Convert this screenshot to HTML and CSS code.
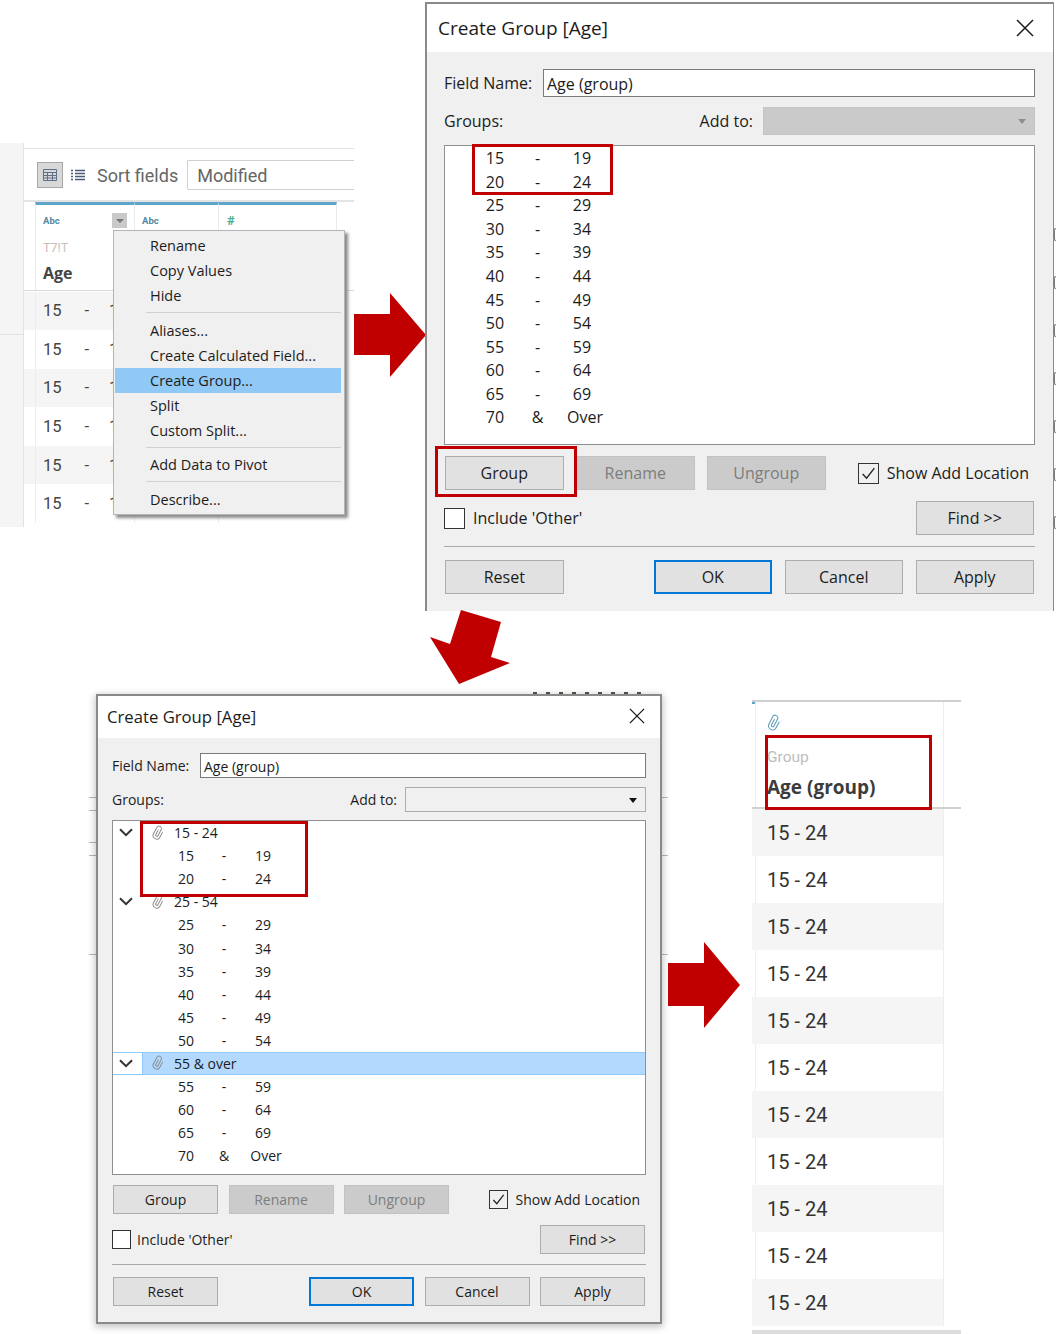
FILE: index.html
```html
<!DOCTYPE html>
<html lang="en">
<head>
<meta charset="utf-8">
<title>Create Group</title>
<link rel="stylesheet" href="styles.css">
</head>
<body>
<svg width="0" height="0" class="defs">
  <symbol id="clip" viewBox="0 0 20 20"><path transform="rotate(28 10 10)" d="M8.500 6V13a1.500 1.500 0 0 0 3 0V4.500a3 3 0 0 0-6 0V13.500a4.500 4.500 0 0 0 9 0V6" fill="none" stroke="currentColor" stroke-width="1.200"/></symbol>
  <symbol id="chev" viewBox="0 0 14 9"><path d="M1 1.200 7 7.200 13 1.200" fill="none" stroke="currentColor" stroke-width="2"/></symbol>
  <symbol id="close" viewBox="0 0 18 18"><path d="M1 1 17 17M17 1 1 17" fill="none" stroke="currentColor" stroke-width="1.500"/></symbol>
  <symbol id="tick" viewBox="0 0 16 16"><path d="M2.500 8.500 6.200 12.500 13.500 3" fill="none" stroke="currentColor" stroke-width="1.300"/></symbol>
</svg>

<main class="canvas">

  <section class="sheet">
    <div class="side"><div class="side-top"></div><div class="side-bottom"></div></div>
    <div class="sheet-main">
      <div class="toolbar">
        <span class="view-btn">
          <svg width="14" height="12" viewBox="0 0 14 12"><path d="M.5.500h13v11H.500zM.5 3.500h13M.5 6.500h13M.5 9h13M4.500 3.500V11.500M9.500 3.500V11.500" fill="none" stroke="#5d7088"/></svg>
        </span>
        <svg class="list-icon" width="14" height="12" viewBox="0 0 14 12"><path d="M0 1.500h2M0 4.500h2M0 7.500h2M0 10.500h2M4 1.500h10M4 4.500h10M4 7.500h10M4 10.500h10" fill="none" stroke="#4a5d78" stroke-width="1.400"/></svg>
        <span class="sort-label">Sort fields</span>
        <span class="sort-select">Modified</span>
      </div>
      <div class="head">
        <div class="hcol hcol-a">
          <span class="abc">Abc</span>
          <span class="src">T7!T</span>
          <span class="fname">Age</span>
          <span class="drop"><i></i></span>
        </div>
        <div class="hcol hcol-b"><span class="abc">Abc</span></div>
        <div class="hcol hcol-c"><span class="hash">#</span></div>
      </div>
      <div class="drows">
        <div class="drow odd"><b></b><b class="val"><span>15</span><span>-</span><span>1</span></b><b></b><b></b></div>
        <div class="drow"><b></b><b class="val"><span>15</span><span>-</span><span>1</span></b><b></b><b></b></div>
        <div class="drow odd"><b></b><b class="val"><span>15</span><span>-</span><span>1</span></b><b></b><b></b></div>
        <div class="drow"><b></b><b class="val"><span>15</span><span>-</span><span>1</span></b><b></b><b></b></div>
        <div class="drow odd"><b></b><b class="val"><span>15</span><span>-</span><span>1</span></b><b></b><b></b></div>
        <div class="drow"><b></b><b class="val"><span>15</span><span>-</span><span>1</span></b><b></b><b></b></div>
      </div>
    </div>
    <ul class="menu">
      <li>Rename</li>
      <li>Copy Values</li>
      <li>Hide</li>
      <li class="msep"></li>
      <li>Aliases...</li>
      <li>Create Calculated Field...</li>
      <li class="active">Create Group...</li>
      <li>Split</li>
      <li>Custom Split...</li>
      <li class="msep"></li>
      <li>Add Data to Pivot</li>
      <li class="msep"></li>
      <li>Describe...</li>
    </ul>
  </section>

  <svg class="arrow arrow-right-1" width="72" height="84" viewBox="0 0 72 84"><path d="M0 21H36V0L72 42 36 84V62H0Z"/></svg>

  <div class="edge-strip"><i></i><i></i><i></i><i></i><i></i><i></i><i></i></div>

  <section class="dialog d1">
    <header class="dlg-title"><span>Create Group [Age]</span><svg class="dlg-x"><use href="#close"/></svg></header>
    <div class="dlg-body">
      <div class="frow"><label class="flabel">Field Name:</label><div class="input">Age (group)</div></div>
      <div class="frow grow"><label class="glabel">Groups:</label><label>Add to:</label><div class="select off"><i></i></div></div>
      <div class="list">
        <div class="lrow"><span>15</span><span>-</span><span>19</span></div>
        <div class="lrow"><span>20</span><span>-</span><span>24</span></div>
        <div class="lrow"><span>25</span><span>-</span><span>29</span></div>
        <div class="lrow"><span>30</span><span>-</span><span>34</span></div>
        <div class="lrow"><span>35</span><span>-</span><span>39</span></div>
        <div class="lrow"><span>40</span><span>-</span><span>44</span></div>
        <div class="lrow"><span>45</span><span>-</span><span>49</span></div>
        <div class="lrow"><span>50</span><span>-</span><span>54</span></div>
        <div class="lrow"><span>55</span><span>-</span><span>59</span></div>
        <div class="lrow"><span>60</span><span>-</span><span>64</span></div>
        <div class="lrow"><span>65</span><span>-</span><span>69</span></div>
        <div class="lrow"><span>70</span><span>&amp;</span><span class="over">Over</span></div>
        <div class="redbox rb-list"></div>
      </div>
      <div class="brow r1">
        <button class="btn">Group</button><button class="btn off">Rename</button><button class="btn off">Ungroup</button>
        <span class="check on right"><i class="cb"><svg><use href="#tick"/></svg></i>Show Add Location</span>
        <div class="redbox rb-btn"></div>
      </div>
      <div class="brow r2">
        <span class="check"><i class="cb"></i>Include 'Other'</span>
        <button class="btn right">Find &gt;&gt;</button>
      </div>
      <div class="sep"></div>
      <div class="brow r3">
        <button class="btn">Reset</button>
        <button class="btn ok right">OK</button><button class="btn">Cancel</button><button class="btn">Apply</button>
      </div>
    </div>
  </section>

  <svg class="arrow arrow-down" width="81" height="75" viewBox="0 0 81 75"><path d="M31 0 71 12 61 47 80 53 29 74 0 27 20 34Z"/></svg>

  <div class="backdrop-lines"></div>
  <div class="top-frag"></div>

  <section class="dialog d2">
    <header class="dlg-title"><span>Create Group [Age]</span><svg class="dlg-x"><use href="#close"/></svg></header>
    <div class="dlg-body">
      <div class="frow"><label class="flabel">Field Name:</label><div class="input">Age (group)</div></div>
      <div class="frow grow"><label class="glabel">Groups:</label><label>Add to:</label><div class="select"><i></i></div></div>
      <div class="list">
        <div class="grow-row"><svg class="chev"><use href="#chev"/></svg><svg class="pclip"><use href="#clip"/></svg><span>15 - 24</span></div>
        <div class="lrow"><span>15</span><span>-</span><span>19</span></div>
        <div class="lrow"><span>20</span><span>-</span><span>24</span></div>
        <div class="grow-row"><svg class="chev"><use href="#chev"/></svg><svg class="pclip"><use href="#clip"/></svg><span>25 - 54</span></div>
        <div class="lrow"><span>25</span><span>-</span><span>29</span></div>
        <div class="lrow"><span>30</span><span>-</span><span>34</span></div>
        <div class="lrow"><span>35</span><span>-</span><span>39</span></div>
        <div class="lrow"><span>40</span><span>-</span><span>44</span></div>
        <div class="lrow"><span>45</span><span>-</span><span>49</span></div>
        <div class="lrow"><span>50</span><span>-</span><span>54</span></div>
        <div class="grow-row sel"><svg class="chev"><use href="#chev"/></svg><svg class="pclip"><use href="#clip"/></svg><span>55 &amp; over</span></div>
        <div class="lrow"><span>55</span><span>-</span><span>59</span></div>
        <div class="lrow"><span>60</span><span>-</span><span>64</span></div>
        <div class="lrow"><span>65</span><span>-</span><span>69</span></div>
        <div class="lrow"><span>70</span><span>&amp;</span><span class="over">Over</span></div>
        <div class="redbox rb-list"></div>
      </div>
      <div class="brow r1">
        <button class="btn">Group</button><button class="btn off">Rename</button><button class="btn off">Ungroup</button>
        <span class="check on right"><i class="cb"><svg><use href="#tick"/></svg></i>Show Add Location</span>
      </div>
      <div class="brow r2">
        <span class="check"><i class="cb"></i>Include 'Other'</span>
        <button class="btn right">Find &gt;&gt;</button>
      </div>
      <div class="sep"></div>
      <div class="brow r3">
        <button class="btn">Reset</button>
        <button class="btn ok right">OK</button><button class="btn">Cancel</button><button class="btn">Apply</button>
      </div>
    </div>
  </section>

  <svg class="arrow arrow-right-2" width="72" height="86" viewBox="0 0 72 86"><path d="M0 21H36V0L72 43 36 86V64H0Z"/></svg>

  <section class="result">
    <div class="r-head">
      <svg class="r-clip"><use href="#clip"/></svg>
      <span class="r-src">Group</span>
      <span class="r-name">Age (group)</span>
      <div class="redbox rb-result"></div>
    </div>
    <div class="r-row odd">15 - 24</div>
    <div class="r-row">15 - 24</div>
    <div class="r-row odd">15 - 24</div>
    <div class="r-row">15 - 24</div>
    <div class="r-row odd">15 - 24</div>
    <div class="r-row">15 - 24</div>
    <div class="r-row odd">15 - 24</div>
    <div class="r-row">15 - 24</div>
    <div class="r-row odd">15 - 24</div>
    <div class="r-row">15 - 24</div>
    <div class="r-row odd">15 - 24</div>
    <div class="r-foot"></div>
  </section>
</main>
</body>
</html>
```
FILE: styles.css
```css
* { box-sizing: border-box; }
html, body { margin: 0; padding: 0; background: #fff; }
body { font-family: "Open Sans", "Noto Sans", sans-serif; color: #1c1c1c; }
.defs { position: absolute; }
.canvas { position: relative; width: 1056px; height: 1334px; overflow: hidden; background: #fff; }

.arrow { position: absolute; fill: #c00000; }
.arrow-right-1 { left: 354px; top: 293px; }
.arrow-right-2 { left: 668px; top: 942px; }
.arrow-down { left: 430px; top: 610px; }

.redbox { position: absolute; border: 3px solid #c00000; pointer-events: none; }

/* Data sheet */
.sheet { position: absolute; left: 0; top: 143px; width: 354px; height: 384px; display: flex; font-family: "Roboto", "Open Sans", sans-serif; }
.side { width: 24px; background: #f5f5f5; border-right: 1px solid #e2e2e2; flex: none; }
.side-top { height: 192px; border-bottom: 1px solid #e2e2e2; }
.sheet-main { flex: 1; min-width: 0; display: flex; flex-direction: column; overflow: hidden; }
.toolbar { height: 54px; margin-top: 5px; border-top: 1px solid #e3e3e3; border-bottom: 2px solid #e3e3e3; display: flex; align-items: center; padding: 0 0 0 13px; flex: none; }
.view-btn { width: 26px; height: 26px; background: #d8d8d8; border: 1px solid #a8a8a8; display: flex; align-items: center; justify-content: center; flex: none; }
.list-icon { margin-left: 8px; flex: none; }
.sort-label { margin-left: 12px; padding-top: 2px; font-size: 18px; color: #666; white-space: nowrap; }
.sort-select { margin-left: 9px; flex: 1; height: 30px; border: 1px solid #d0d0d0; border-right: 0; border-radius: 2px 0 0 2px; padding: 1px 0 0 9px; font-size: 18px; line-height: 28px; color: #666; white-space: nowrap; }
.head { display: grid; grid-template-columns: 99px 84px 119px; padding-left: 11px; height: 89px; border-bottom: 1px solid #d8d8d8; flex: none; }
.hcol { position: relative; border-top: 3px solid #5fa5cb; border-left: 1px solid #eaeaea; padding: 10px 0 0 7px; display: flex; flex-direction: column; align-items: flex-start; }
.hcol-c { border-right: 1px solid #eaeaea; padding-left: 8px; }
.abc { font-size: 9.500px; line-height: 12px; font-weight: 700; color: #53899f; }
.hash { font-size: 13px; line-height: 12px; font-weight: 700; color: #4ead8f; }
.src { margin-top: 13px; font-size: 12.500px; line-height: 15px; color: #c9bdb9; }
.fname { margin-top: 7px; font-size: 16px; line-height: 22px; font-weight: 700; color: #444; font-family: "Open Sans", sans-serif; }
.drop { position: absolute; left: 76px; top: 8px; width: 15px; height: 15px; background: #c9c9c9; display: flex; align-items: center; justify-content: center; }
.drop i { border: 4px solid transparent; border-top: 4px solid #777; border-bottom: 0; }
.drows { padding-top: .5px; }
.drow { display: grid; grid-template-columns: 11px 99px 84px 119px; width: 313px; height: 38.600px; font-size: 16.500px; color: #444; }
.drow b { font-weight: 400; border-left: 1px solid #ededed; }
.drow b:first-child { border-left: 0; }
.drow.odd { background: #f5f5f5; }
.val { display: flex; align-items: center; padding-left: 7px; }
.val span:nth-child(2) { margin-left: 23px; }
.val span:nth-child(3) { margin-left: 20px; }

.menu { position: absolute; left: 113px; top: 87px; width: 232px; height: 285px; margin: 0; padding: 2px 3px 0 1px; list-style: none; background: #f0f0f0; border: 1px solid #b5b5b5; box-shadow: 3px 3px 3px #8a8a8a; font-family: "Open Sans", sans-serif; font-size: 14.500px; color: #1c1c1c; }
.menu li { height: 25px; line-height: 25px; padding-left: 35px; white-space: nowrap; }
.menu li.active { background: #90c8f6; }
.menu li.msep { height: 1px; margin: 4px 0 4px 31px; padding: 0; background: #d0d0d0; }
.menu li.msep:nth-child(4) { margin-bottom: 5px; }
.menu li.msep:nth-child(12) { margin-bottom: 5px; }

/* Stray pieces of the pictures underneath the dialogs */
.edge-strip { position: absolute; left: 1054px; top: 228px; width: 2px; display: flex; flex-direction: column; gap: 35px; }
.edge-strip i { height: 13px; border: 1px solid #777; border-right: 0; border-radius: 3px 0 0 3px; }
.backdrop-lines { position: absolute; left: 89px; top: 790px; width: 579px; height: 170px; background:
  linear-gradient(#b8b8b8, #b8b8b8) 0 7px / 100% 1px no-repeat,
  linear-gradient(#b8b8b8, #b8b8b8) 0 20px / 8px 1px no-repeat,
  linear-gradient(#b8b8b8, #b8b8b8) 0 52px / 8px 1px no-repeat,
  linear-gradient(#b8b8b8, #b8b8b8) 0 65px / 100% 1px no-repeat,
  linear-gradient(#b8b8b8, #b8b8b8) 0 164px / 100% 1px no-repeat; }
.top-frag { position: absolute; left: 533px; top: 692px; width: 117px; height: 2px; background: repeating-linear-gradient(to right, #5a5248 0 4px, transparent 4px 13px); }

/* Dialogs */
.dialog { position: absolute; background: #f0f0f0; }
.dialog .dlg-title { background: #fff; display: flex; align-items: center; justify-content: space-between; white-space: nowrap; }
.dlg-x { color: #1c1c1c; flex: none; }
.dlg-body { display: flex; flex-direction: column; }
.frow { display: flex; align-items: center; flex: none; white-space: nowrap; }
.flabel { flex: none; }
.glabel { flex: 1; }
.input { flex: 1; height: 100%; background: #fff; border: 1px solid #7a7a7a; display: flex; align-items: center; padding: 1px 0 0 3px; }
.select { height: 100%; position: relative; background: #f0f0f0; border: 1px solid #adadad; flex: none; }
.select.off { background: #cacaca; border-color: #c4c4c4; }
.select i { position: absolute; top: 50%; right: 8px; margin-top: -2px; border: 4px solid transparent; border-top: 5px solid #111; border-bottom: 0; }
.select.off i { border-top-color: #8e8e8e; }
.list { position: relative; background: #fff; border: 1px solid #8f8f8f; flex: none; }
.lrow { display: grid; align-items: center; justify-items: center; white-space: nowrap; }
.over { margin-left: 6px; }
.brow { position: relative; display: flex; align-items: center; flex: none; white-space: nowrap; }
.btn { flex: none; padding: 0; margin: 0; height: 100%; background: #e1e1e1; border: 1px solid #adadad; font: inherit; color: #1c1c1c; }
.btn.off { background: #cbcbcb; border-color: #c2c2c2; color: #7d7d7d; }
.btn.ok { border: 2px solid #0078d7; }
.right { margin-left: auto; }
.check { display: flex; align-items: center; }
.cb { display: flex; align-items: center; justify-content: center; background: #fff; border: 1px solid #333; flex: none; }
.check.on .cb { background: #f0f0f0; }
.cb svg { display: block; color: #222; }
.sep { height: 1px; background: #a8a8a8; flex: none; }

.d1 { left: 425px; top: 2px; width: 629px; height: 609px; border: 2px solid #8a8a8a; border-right-width: 1px; border-bottom: 0; font-size: 16px; }
.d1 .dlg-title { height: 48px; padding: 0 19px 0 11px; font-size: 19px; }
.d1 .dlg-x { width: 18px; height: 18px; }
.d1 .dlg-body { padding: 17px 18px 0 17px; }
.d1 .frow { height: 28px; }
.d1 .flabel { width: 99px; }
.d1 .grow { margin-top: 10px; }
.d1 .select { width: 272px; margin-left: 10px; }
.d1 .list { margin-top: 10px; height: 300px; padding-top: .5px; }
.d1 .lrow { height: 23.550px; grid-template-columns: 30px 40px 45px 44px; }
.d1 .lrow span:first-child { grid-column: 2; }
.d1 .rb-list { left: 27px; top: -2px; width: 141px; height: 51px; }
.d1 .brow { padding: 0 1px; }
.d1 .btn { width: 118.500px; }
.d1 .r1 { margin-top: 11px; height: 34px; gap: 12.500px; }
.d1 .rb-btn { left: -9px; top: -10px; width: 142px; height: 51px; }
.d1 .r1 .check { gap: 8px; padding-right: 5px; }
.d1 .cb { width: 21px; height: 21px; }
.d1 .cb svg { width: 17px; height: 17px; }
.d1 .r2 { margin-top: 11px; height: 34px; padding-left: 0; }
.d1 .r2 .check { gap: 8px; }
.d1 .sep { margin-top: 11px; }
.d1 .r3 { margin-top: 13px; height: 34px; gap: 12.500px; }

.d2 { left: 96px; top: 694px; width: 566px; height: 630px; border: 2px solid #8a8a8a; box-shadow: 0 2px 7px 1px rgba(0, 0, 0, .24); font-size: 14px; }
.d2 .dlg-title { height: 42px; padding: 0 15px 2px 9px; font-size: 16.700px; }
.d2 .dlg-x { width: 16px; height: 16px; }
.d2 .dlg-body { padding: 15px 14px 0 14px; }
.d2 .frow { height: 25px; }
.d2 .flabel { width: 88px; }
.d2 .grow { margin-top: 9px; }
.d2 .select { width: 241px; margin-left: 8px; }
.d2 .list { margin-top: 8px; height: 355px; }
.d2 .lrow { height: 23.100px; grid-template-columns: 58px 30px 46px 32px; }
.d2 .lrow span:first-child { grid-column: 2; }
.grow-row { height: 23.100px; display: flex; align-items: center; white-space: nowrap; }
.chev { width: 14px; height: 9px; margin-left: 6px; color: #333; flex: none; }
.pclip { width: 16px; height: 16px; margin-left: 17px; color: #8a8a8a; flex: none; }
.grow-row span { margin-left: 8px; }
.grow-row.sel { background: linear-gradient(to right, #fff 29px, #8fcaff 29px, #8fcaff 30px, #b3d9ff 30px); box-shadow: inset 0 1px #8fcaff, inset 0 -1px #8fcaff; }
.d2 .rb-list { left: 27px; top: 0; width: 168px; height: 76px; }
.d2 .brow { padding: 0 1px; }
.d2 .btn { width: 105px; }
.d2 .r1 { margin-top: 10px; height: 29px; gap: 10.500px; }
.d2 .r1 .check { gap: 7px; padding-right: 5px; }
.d2 .cb { width: 19px; height: 19px; }
.d2 .cb svg { width: 15px; height: 15px; }
.d2 .r2 { margin-top: 11px; height: 29px; padding-left: 0; }
.d2 .r2 .check { gap: 6px; }
.d2 .sep { margin-top: 10px; }
.d2 .r3 { margin-top: 12px; height: 29px; gap: 10.500px; }

/* Result */
.result { position: absolute; left: 752px; top: 700px; width: 209px; font-family: "Roboto", "Open Sans", sans-serif; }
.r-head { position: relative; height: 109px; border-top: 2px solid #d0d0d0; border-bottom: 2px solid #d0d0d0; padding: 12px 0 0 15px; display: flex; flex-direction: column; align-items: flex-start; background:
  linear-gradient(#5fa5cb, #5fa5cb) 0 0 / 3px 2px no-repeat,
  linear-gradient(#eee, #eee) 3px 0 / 1px 100% no-repeat,
  linear-gradient(#eee, #eee) 191px 0 / 1px 100% no-repeat; }
.r-clip { width: 18px; height: 18px; margin-left: -2px; color: #5f9db8; }
.r-src { margin-top: 15px; font-size: 15.500px; line-height: 20px; color: #bdbdbd; }
.r-name { margin-top: 8px; font-size: 19px; line-height: 24px; font-weight: 700; color: #3c3c3c; font-family: "Open Sans", sans-serif; }
.rb-result { left: 13px; top: 33px; width: 167px; height: 75px; }
.r-row { width: 192px; height: 47px; padding-left: 15px; display: flex; align-items: center; font-size: 20px; color: #333; border-right: 1px solid #eee; background: linear-gradient(#eee, #eee) 3px 0 / 1px 100% no-repeat; }
.r-row.odd { background: #f5f5f5; }
.r-foot { height: 4px; margin-top: 4px; background: #ddd; }
```
